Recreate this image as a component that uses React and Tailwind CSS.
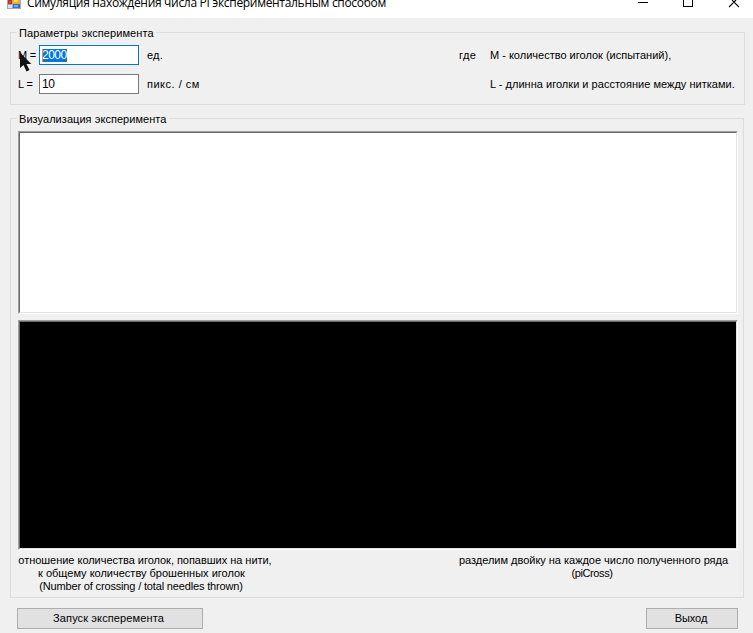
import React from 'react';

function GroupBox({ title, className, titleClass, children }) {
  return (
    <section className={`border border-[#dcdcdc] ${className}`}>
      <h2 className={`-mt-[7px] ml-[6px] h-[14px] w-fit whitespace-nowrap bg-[#f0f0f0] px-[2px] leading-[14px] ${titleClass}`}>{title}</h2>
      {children}
    </section>
  );
}

function SunkenPanel({ className }) {
  return (
    <div className="w-[720px] border border-b-white border-l-[#a0a0a0] border-r-white border-t-[#a0a0a0]">
      <div className={`border border-b-[#e3e3e3] border-l-[#696969] border-r-[#e3e3e3] border-t-[#696969] ${className}`} />
    </div>
  );
}

function TitleBar() {
  return (
    <header className="flex h-[18px] items-start bg-white">
      <svg className="ml-[7px] shrink-0" width="14" height="9" viewBox="0 0 14 9" shapeRendering="crispEdges">
        <rect width="14" height="9" fill="#a3a8b6" />
        <rect x="1" y="0" width="4" height="4" fill="#c9281d" />
        <rect x="2" y="1" width="2" height="2" fill="#e04a38" />
        <rect x="6" y="0" width="7" height="4" fill="#f0b01c" />
        <rect x="7" y="0" width="4" height="2" fill="#ffd452" />
        <rect x="1" y="5" width="4" height="3" fill="#dfe2ea" />
        <rect x="6" y="4" width="7" height="4" fill="#356cd0" />
        <rect x="7" y="5" width="4" height="2" fill="#72aaf4" />
      </svg>
      <h1 className="-mt-[6px] ml-[6px] h-[18px] w-[607px] whitespace-nowrap font-['Open_Sans',sans-serif] text-[12px] leading-[18px] tracking-[-0.31px]">
        Симуляция нахождения числа PI экспериментальным способом
      </h1>
      <svg className="ml-[4px] shrink-0" width="102" height="8" viewBox="0 0 102 8" fill="none" stroke="#000">
        <path d="M0 2.5H10M45.500 0V6.500H54.500V0" shapeRendering="crispEdges" />
        <path d="M91 7L96 2L101 7M96 2L94 0M96 2L98 0" strokeWidth="1.1" />
      </svg>
    </header>
  );
}

export default function App() {
  return (
    <main className="relative h-[633px] w-[753px] overflow-hidden bg-[#f0f0f0] font-['Liberation_Sans',Arial,sans-serif] text-[11px] text-black">
      <TitleBar />
      <GroupBox title="Параметры эксперимента" titleClass="tracking-[0.08px]" className="ml-[10px] mt-[14px] h-[73px] w-[735px]">
        <div className="ml-[7px] mt-[5px] flex h-[20px] items-center whitespace-nowrap">
          <span className="w-[21px] tracking-[-0.2px]">M =</span>
          <div className="flex h-[20px] w-[100px] items-center border border-[#0078d7] bg-white pl-[2px]">
            <span className="relative h-[13px] w-[25px] bg-[#0078d7] text-[12px] leading-[13px] tracking-[-0.5px] text-white">
              2000
              <i className="absolute left-0 top-0 h-[13px] w-px bg-[#ff8728]" />
            </span>
          </div>
          <span className="ml-[8px] w-[312px] tracking-[0.2px]">ед.</span>
          <span className="w-[31px] tracking-[0.4px]">где</span>
          <span>M - количество иголок (испытаний),</span>
        </div>
        <div className="ml-[7px] mt-[9px] flex h-[20px] items-center whitespace-nowrap">
          <span className="w-[21px] tracking-[-0.1px]">L =</span>
          <div className="flex h-[20px] w-[100px] items-center border border-[#7a7a7a] bg-white pl-[2px]">
            <span className="text-[12px] tracking-[-0.5px]">10</span>
          </div>
          <span className="ml-[8px] w-[343px] tracking-[0.5px]">пикс. / см</span>
          <span className="tracking-[0.02px]">L - длинна иголки и расстояние между нитками.</span>
        </div>
      </GroupBox>
      <GroupBox title="Визуализация эксперимента" titleClass="tracking-[0.05px]" className="ml-[10px] mt-[13px] h-[480px] w-[734px]">
        <div className="ml-[7px] mt-[5px] flex flex-col gap-[6px]">
          <SunkenPanel className="h-[181px] bg-white" />
          <SunkenPanel className="h-[228px] bg-black" />
        </div>
        <div className="ml-[7px] mt-[4px] flex whitespace-nowrap text-center leading-[13px]">
          <div className="flex w-[254px] flex-col items-center">
            <span className="tracking-[-0.03px]">отношение количества иголок, попавших на нити,</span>
            <span className="mr-[7px]">к общему количеству брошенных иголок</span>
            <span className="mr-[8px] tracking-[-0.16px]">(Number of crossing / total needles thrown)</span>
          </div>
          <div className="ml-[187px] flex w-[269px] flex-col items-center">
            <span className="tracking-[-0.02px]">разделим двойку на каждое число полученного ряда</span>
            <span className="mr-[3px] tracking-[-0.4px]">(piCross)</span>
          </div>
        </div>
      </GroupBox>
      <footer className="ml-[17px] mt-[10px] flex w-[721px] justify-between">
        <button className="h-[21px] w-[186px] border border-[#adadad] bg-[#e1e1e1] pr-[3px] tracking-[0.12px]">Запуск эксперемента</button>
        <button className="h-[21px] w-[92px] border border-[#adadad] bg-[#e1e1e1] pr-[2px] tracking-[-0.1px]">Выход</button>
      </footer>
      <svg className="absolute left-[19px] top-[52px]" width="13" height="20" viewBox="0 0 13 20">
        <path d="M1 0.500V16L4.500 13L7.500 19.500L10.500 18L7.500 12H12.300Z" fill="#111" />
      </svg>
    </main>
  );
}
